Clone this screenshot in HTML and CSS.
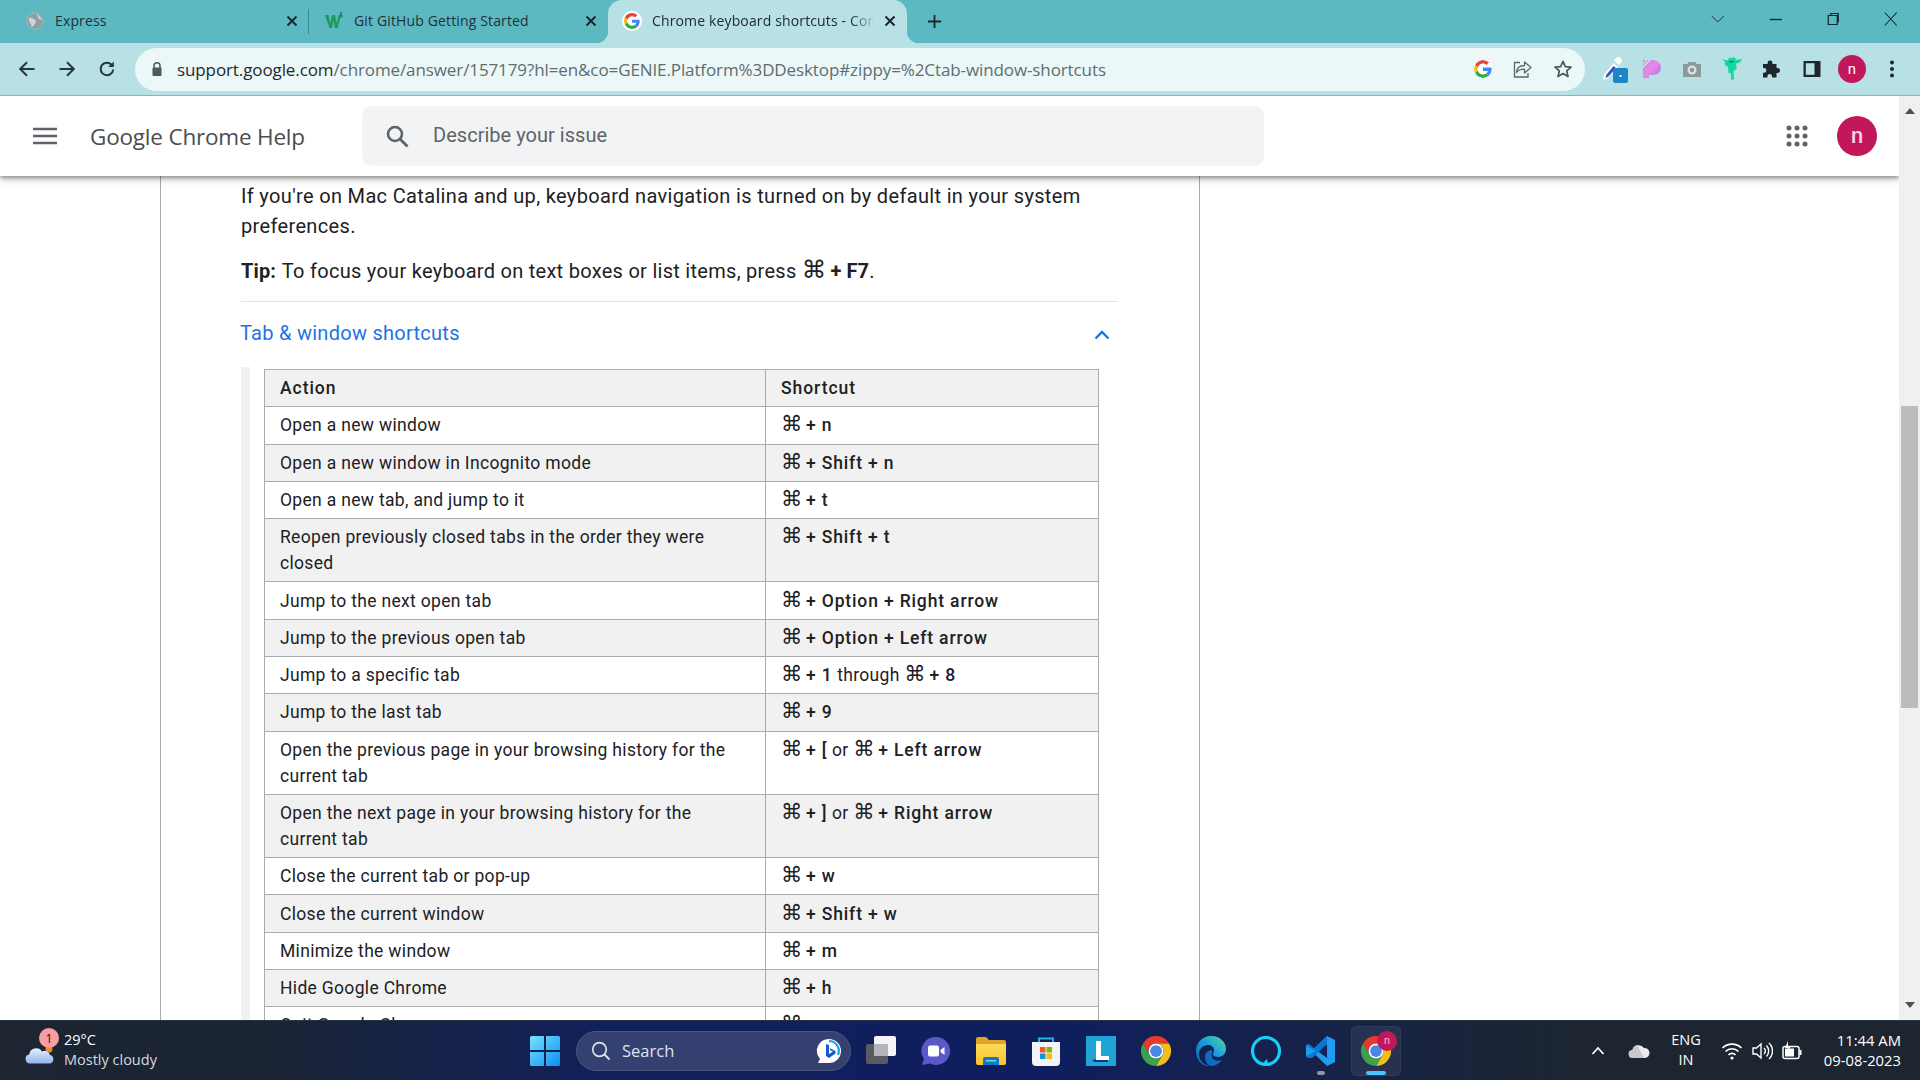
FILE: index.html
```html
<!DOCTYPE html>
<html lang="en">
<head>
<meta charset="utf-8">
<title>Chrome keyboard shortcuts</title>
<link rel="stylesheet" href="styles.css">
</head>
<body>
<svg class="defs" width="0" height="0" aria-hidden="true">
  <defs>
    <symbol id="g-logo" viewBox="0 0 48 48">
      <path fill="#EA4335" d="M24 9.5c3.54 0 6.71 1.22 9.21 3.6l6.85-6.85C35.9 2.38 30.47 0 24 0 14.62 0 6.51 5.38 2.56 13.22l7.98 6.19C12.43 13.72 17.74 9.5 24 9.5z"/>
      <path fill="#4285F4" d="M46.98 24.55c0-1.57-.15-3.09-.38-4.55H24v9.02h12.94c-.58 2.96-2.26 5.48-4.78 7.18l7.73 6c4.51-4.18 7.09-10.36 7.09-17.65z"/>
      <path fill="#FBBC05" d="M10.53 28.59c-.48-1.45-.76-2.99-.76-4.59s.27-3.14.76-4.59l-7.98-6.19C.92 16.46 0 20.12 0 24c0 3.88.92 7.54 2.56 10.78l7.97-6.19z"/>
      <path fill="#34A853" d="M24 48c6.48 0 11.93-2.13 15.89-5.81l-7.73-6c-2.15 1.45-4.92 2.3-8.16 2.3-6.26 0-11.57-4.22-13.47-9.91l-7.98 6.19C6.51 42.62 14.62 48 24 48z"/>
    </symbol>
    <symbol id="chrome-logo" viewBox="0 0 48 48">
      <path fill="#E33B2E" d="M3.2 12A24 24 0 0 1 44.8 12L24 12A12 12 0 0 0 13.6 30Z"/>
      <path fill="#F2BE1B" d="M44.8 12A24 24 0 0 1 24 48L34.4 30A12 12 0 0 0 24 12Z"/>
      <path fill="#3BA14B" d="M3.2 12A24 24 0 0 0 24 48L34.4 30A12 12 0 0 1 13.6 30Z"/>
      <circle cx="24" cy="24" r="12" fill="#fff"/>
      <circle cx="24" cy="24" r="9.4" fill="#4A86E8"/>
    </symbol>
    <symbol id="x-mark" viewBox="0 0 12 12">
      <path d="M1.5 1.5L10.5 10.5M10.5 1.5L1.5 10.5" fill="none" stroke="currentColor" stroke-width="1.9"/>
    </symbol>
    <linearGradient id="pastel" x1="0" y1="0" x2="1" y2="1">
      <stop offset="0" stop-color="#b78cf5"/><stop offset=".5" stop-color="#ee86e2"/><stop offset="1" stop-color="#7f7cf5"/>
    </linearGradient>
    <linearGradient id="win" x1="0" y1="0" x2="1" y2="1">
      <stop offset="0" stop-color="#74e4fb"/><stop offset="1" stop-color="#0f8df5"/>
    </linearGradient>
    <linearGradient id="edge1" x1="0" y1="1" x2="1" y2="0">
      <stop offset="0" stop-color="#0c59a4"/><stop offset=".55" stop-color="#1b9de2"/><stop offset="1" stop-color="#5fd98a"/>
    </linearGradient>
    <linearGradient id="folder" x1="0" y1="0" x2="0" y2="1">
      <stop offset="0" stop-color="#ffd95c"/><stop offset="1" stop-color="#fcc62d"/>
    </linearGradient>
    <linearGradient id="cloud" x1="0" y1="0" x2="0" y2="1">
      <stop offset="0" stop-color="#e6effc"/><stop offset="1" stop-color="#8fb6ee"/>
    </linearGradient>
  </defs>
</svg>

<div class="window">
  <header class="tabstrip">
    <div class="tab">
      <svg class="favicon" viewBox="0 0 18 18"><circle cx="9" cy="9" r="8.2" fill="#8f9ea3" stroke="#a7b6ba"/><path d="M3 6c3-1 4 1 6 2s1 3 0 4-2 3-3 3c-1-2-1-3-2-4S3 8 3 6zM11 2c2 1 4 3 5 6-2 0-4-1-4-3z" fill="#c9d5d8"/></svg>
      <span class="tab-title">Express</span>
      <svg class="tab-close"><use href="#x-mark"/></svg>
    </div>
    <div class="tab tab-sep">
      <svg class="favicon" viewBox="0 0 18 18"><path d="M0 3h3.400l1.700 8 2-8h2.800l2 8 1.700-8H16l-3.400 13H10L8.500 8.500 7 16H4.400z" fill="#1d9a5b"/><path d="M15 .5h2.600L16 2.500q1.700.3 1.700 1.700 0 1.600-1.900 1.600-1.100 0-1.700-.7l.6-.7q.4.500 1.100.500.8 0 .8-.7 0-.8-1.600-.7z" fill="#1d7a4c"/></svg>
      <span class="tab-title">Git GitHub Getting Started</span>
      <svg class="tab-close"><use href="#x-mark"/></svg>
    </div>
    <div class="tab tab-active">
      <span class="fav-disc"><svg class="fav-g"><use href="#g-logo"/></svg></span>
      <span class="tab-title tab-fade">Chrome keyboard shortcuts - Cor</span>
      <svg class="tab-close"><use href="#x-mark"/></svg>
    </div>
    <svg class="new-tab" viewBox="0 0 16 16"><path d="M8 1v14M1 8h14" fill="none" stroke="#1c2a2e" stroke-width="2"/></svg>
    <div class="win-controls">
      <svg class="wc" viewBox="0 0 16 16"><path d="M2 5l6 6 6-6" fill="none" stroke="#1d3338" stroke-width="1"/></svg>
      <svg class="wc" viewBox="0 0 16 16"><path d="M2 8.500h12" fill="none" stroke="#14262a" stroke-width="1.400"/></svg>
      <svg class="wc" viewBox="0 0 16 16"><path d="M3.500 4.500h9v9h-9zM6 4.500V2.500h7.500V11h-1" fill="none" stroke="#14262a" stroke-width="1.200"/></svg>
      <svg class="wc" viewBox="0 0 16 16"><path d="M2 1.500l12 13M14 1.500l-12 13" fill="none" stroke="#14262a" stroke-width="1.100"/></svg>
    </div>
  </header>

  <nav class="toolbar">
    <span class="tbtn"><svg class="i20" viewBox="0 0 20 20"><path d="M17.500 10H3.500M10 3.200L3.200 10l6.800 6.800" fill="none" stroke="#22383d" stroke-width="2"/></svg></span>
    <span class="tbtn"><svg class="i20" viewBox="0 0 20 20"><path d="M2.500 10h14M10 3.200l6.800 6.800-6.800 6.800" fill="none" stroke="#22383d" stroke-width="2"/></svg></span>
    <span class="tbtn"><svg class="i20" viewBox="0 0 20 20"><path d="M16.200 10.500a6.300 6.300 0 1 1-1.800-5" fill="none" stroke="#22383d" stroke-width="2"/><path d="M16.800 2.500v5.500h-5.500z" fill="#22383d"/></svg></span>
    <div class="omnibox">
      <svg class="lock" viewBox="0 0 14 16"><path d="M4 7V4.800a3 3 0 0 1 6 0V7" fill="none" stroke="#4c5a5d" stroke-width="1.500"/><rect x="2.500" y="6.500" width="9" height="8.500" rx="1" fill="#4c5a5d"/></svg>
      <span class="url"><span class="url-host">support.google.com</span>/chrome/answer/157179?hl=en&amp;co=GENIE.Platform%3DDesktop#zippy=%2Ctab-window-shortcuts</span>
      <span class="obtn"><svg class="g-omni"><use href="#g-logo"/></svg></span>
      <span class="obtn"><svg class="i20" viewBox="0 0 20 20"><path d="M11.500 3v3.500C6 6.500 3.800 10 3.500 13.500c1.800-2.600 4.300-3.400 8-3.300V14L18 8.500z" fill="none" stroke="#5c686b" stroke-width="1.300" stroke-linejoin="round"/><path d="M7 3.500H1.500v14.500H15v-4" fill="none" stroke="#5c686b" stroke-width="1.300"/></svg></span>
      <span class="obtn"><svg class="i20" viewBox="0 0 20 20"><path d="M10 2.300l2.300 5.300 5.700.5-4.300 3.800 1.300 5.600L10 14.600l-5 2.900 1.300-5.600L2 8.100l5.700-.5z" fill="none" stroke="#4d5659" stroke-width="1.700" stroke-linejoin="round"/></svg></span>
    </div>
    <div class="ext-row">
      <span class="ext ext-first"><svg class="i28" viewBox="0 0 28 28"><path d="M13.500 8l4.500 4-9.500 11-5.500 2 1-5.500z" fill="#fff"/><path d="M13.500 11l2.500 2-8 9-2.500.7.700-2.700z" fill="#3452c4"/><path d="M17 2l4 .5 1 4-3 3.500-5-4.500z" fill="#fff"/><rect x="13" y="13" width="15" height="15" rx="2" fill="#1d84c6"/><rect x="19.500" y="20" width="2" height="2" fill="#fff"/></svg></span>
      <span class="ext"><svg class="i20" viewBox="0 0 20 20"><path d="M1 1h9.500C15.500 1 19 4 19 8.500S15.500 16 10.500 16H7v3H1z" fill="url(#pastel)"/><path d="M1 7L7 1h2L1 9zM1 4l3-3h1.500L1 5.500z" fill="#d7e7ee"/></svg></span>
      <span class="ext"><svg class="i20" viewBox="0 0 20 20"><path d="M6.500 3h7l1.200 2H19v13H1V5h4.300z" fill="#8f9899"/><circle cx="10" cy="11" r="4.500" fill="#d6e4e6"/><circle cx="10" cy="11" r="2.300" fill="#8f9899"/></svg></span>
      <span class="ext"><svg class="ninja" viewBox="0 0 20 24"><path d="M0 2l5.500 1.500L7 1l6-.5 1 2.500 6-1-2 3.500-4 1 .8 5-3.300 3 .5 7.500-2.500 1.500-1-8-2 1-.5-6.500-3-2-.5-4z" fill="#17d7a0"/><path d="M7 4l5 0-1 1.500H8z" fill="#0b7a5a"/></svg></span>
      <span class="ext"><svg class="i20" viewBox="0 0 20 20"><path d="M8 1.500a2.400 2.400 0 0 1 2.400 2.400V5h4.100v4.100h1.100a2.400 2.400 0 0 1 0 4.800h-1.100v4.600H10v-1.200a2.300 2.300 0 0 0-4.600 0v1.200H1v-4.800h1.100a2.300 2.300 0 0 0 0-4.600H1V5h4.600V3.900A2.400 2.400 0 0 1 8 1.500z" fill="#1f2529"/></svg></span>
      <span class="ext"><svg class="i20" viewBox="0 0 20 20"><path d="M1.500 2h17v16h-17z" fill="#1f2529"/><path d="M3.800 4.200h8.700v11.600H3.800z" fill="#b8e1e5"/></svg></span>
      <span class="ext"><span class="avatar-sm">n</span></span>
      <span class="ext"><svg class="i20" viewBox="0 0 20 20"><circle cx="10" cy="3.500" r="2" fill="#1f2529"/><circle cx="10" cy="10" r="2" fill="#1f2529"/><circle cx="10" cy="16.500" r="2" fill="#1f2529"/></svg></span>
    </div>
  </nav>

  <div class="viewport">
    <div class="page">
      <div class="help-header">
        <svg class="burger" viewBox="0 0 24 18"><path d="M0 2h24M0 9h24M0 16h24" stroke="#5f6368" stroke-width="2.600" fill="none"/></svg>
        <span class="product">Google Chrome Help</span>
        <div class="search-box">
          <svg class="search-ico" viewBox="0 0 24 24"><circle cx="10" cy="10" r="7" fill="none" stroke="#5f6368" stroke-width="2.600"/><path d="M15 15l7.500 7.500" stroke="#5f6368" stroke-width="2.800"/></svg>
          <span class="placeholder">Describe your issue</span>
        </div>
        <svg class="apps" viewBox="0 0 22 22"><g fill="#5f6368"><circle cx="3" cy="3" r="2.500"/><circle cx="11" cy="3" r="2.500"/><circle cx="19" cy="3" r="2.500"/><circle cx="3" cy="11" r="2.500"/><circle cx="11" cy="11" r="2.500"/><circle cx="19" cy="11" r="2.500"/><circle cx="3" cy="19" r="2.500"/><circle cx="11" cy="19" r="2.500"/><circle cx="19" cy="19" r="2.500"/></g></svg>
        <span class="avatar-lg">n</span>
      </div>

      <article class="article">
        <p class="para">If you're on Mac Catalina and up, keyboard navigation is turned on by default in your system preferences.</p>
        <p class="para para-tip"><strong class="tip-label">Tip:</strong> To focus your keyboard on text boxes or list items, press <span class="cmd">⌘</span> <strong>+ F7</strong>.</p>
        <hr class="rule">
        <div class="zippy-title">
          <span class="zippy-text">Tab &amp; window shortcuts</span>
          <svg class="chev" viewBox="0 0 16 10"><path d="M1.500 8.500L8 2l6.500 6.500" fill="none" stroke="#1a73e8" stroke-width="2.400"/></svg>
        </div>
        <div class="zippy-body">
          <table class="keys">
            <thead>
              <tr><th class="col-a">Action</th><th class="col-b">Shortcut</th></tr>
            </thead>
            <tbody>
              <tr><td>Open a new window</td><td><span class="cmd">⌘</span> <strong>+ n</strong></td></tr>
              <tr><td>Open a new window in Incognito mode</td><td><span class="cmd">⌘</span> <strong>+ Shift + n</strong></td></tr>
              <tr><td>Open a new tab, and jump to it</td><td><span class="cmd">⌘</span> <strong>+ t</strong></td></tr>
              <tr><td>Reopen previously closed tabs in the order they were closed</td><td><span class="cmd">⌘</span> <strong>+ Shift + t</strong></td></tr>
              <tr><td>Jump to the next open tab</td><td><span class="cmd">⌘</span> <strong>+ Option + Right arrow</strong></td></tr>
              <tr><td>Jump to the previous open tab</td><td><span class="cmd">⌘</span> <strong>+ Option + Left arrow</strong></td></tr>
              <tr><td>Jump to a specific tab</td><td><span class="cmd">⌘</span> <strong>+ 1</strong> through <span class="cmd">⌘</span> <strong>+ 8</strong></td></tr>
              <tr><td>Jump to the last tab</td><td><span class="cmd">⌘</span> <strong>+ 9</strong></td></tr>
              <tr><td>Open the previous page in your browsing history for the current tab</td><td><span class="cmd">⌘</span> <strong>+ [</strong> or <span class="cmd">⌘</span> <strong>+ Left arrow</strong></td></tr>
              <tr><td>Open the next page in your browsing history for the current tab</td><td><span class="cmd">⌘</span> <strong>+ ]</strong> or <span class="cmd">⌘</span> <strong>+ Right arrow</strong></td></tr>
              <tr><td>Close the current tab or pop-up</td><td><span class="cmd">⌘</span> <strong>+ w</strong></td></tr>
              <tr><td>Close the current window</td><td><span class="cmd">⌘</span> <strong>+ Shift + w</strong></td></tr>
              <tr><td>Minimize the window</td><td><span class="cmd">⌘</span> <strong>+ m</strong></td></tr>
              <tr><td>Hide Google Chrome</td><td><span class="cmd">⌘</span> <strong>+ h</strong></td></tr>
              <tr><td>Quit Google Chrome</td><td><span class="cmd">⌘</span> <strong>+ q</strong></td></tr>
            </tbody>
          </table>
        </div>
      </article>
    </div>
    <aside class="scrollbar">
      <span class="sb-up"></span>
      <span class="sb-thumb"></span>
      <span class="sb-down"></span>
    </aside>
  </div>

  <footer class="taskbar">
    <div class="weather">
      <span class="weather-ico">
        <svg class="cloud-ico" viewBox="0 0 30 18"><circle cx="24" cy="3" r="3.500" fill="#f08a24"/><path d="M5 17.500a4.500 4.500 0 0 1-.8-8.900A7 7 0 0 1 17 5.500a5.500 5.500 0 0 1 8 3.600 4.300 4.300 0 0 1 0 8.400z" fill="url(#cloud)"/></svg>
        <span class="w-badge">1</span>
      </span>
      <div class="weather-text"><span class="w-temp">29°C</span><span class="w-desc">Mostly cloudy</span></div>
    </div>
    <div class="task-center">
      <span class="cell"><svg class="i30" viewBox="0 0 30 30"><path d="M0 1.500A1.500 1.500 0 0 1 1.500 0H14v14H0zM16 0h12.500A1.500 1.500 0 0 1 30 1.500V14H16zM0 16h14v14H1.500A1.500 1.500 0 0 1 0 28.500zM16 16h14v12.500a1.500 1.500 0 0 1-1.500 1.500H16z" fill="url(#win)"/></svg></span>
      <div class="task-search">
        <svg class="ts-ico" viewBox="0 0 20 20"><circle cx="8.500" cy="8.500" r="6.800" fill="none" stroke="#dfe4ee" stroke-width="1.700"/><path d="M13.500 13.500l5 5" stroke="#dfe4ee" stroke-width="1.800"/></svg>
        <span class="ts-text">Search</span>
        <svg class="ts-bing" viewBox="0 0 26 26"><path d="M13 1a12 12 0 0 1 0 24H2l2-4A12 12 0 0 1 13 1z" fill="#fff"/><path d="M13 3a10 10 0 0 1 9 14" fill="none" stroke="#1aa5ea" stroke-width="2.200"/><path d="M10 6l3 1v9l4-2.500-2.500-1L13.500 10l6 3v2.500L13 20l-3-2z" fill="#1458d2"/></svg>
      </div>
      <span class="cell"><svg class="i30" viewBox="0 0 30 30"><rect x="0" y="8" width="22" height="20" rx="2" fill="#5b5b5f"/><rect x="8" y="0" width="22" height="20" rx="2" fill="#f4f4f6"/><rect x="8" y="8" width="14" height="12" fill="#b6b6ba"/></svg></span>
      <span class="cell"><svg class="i30" viewBox="0 0 30 30"><path d="M15 1a14 14 0 1 1-6 26.600L1 29l2-6A14 14 0 0 1 15 1z" fill="#5b58c9"/><rect x="7" y="9.500" width="11" height="11" rx="2" fill="#fff"/><path d="M19.500 14l4-3v8l-4-3z" fill="#fff"/></svg></span>
      <span class="cell"><svg class="i30" viewBox="0 0 30 30"><path d="M0 3a2 2 0 0 1 2-2h8l3 3h15a2 2 0 0 1 2 2v4H0z" fill="#e0a526"/><path d="M0 8h30v19a2 2 0 0 1-2 2H2a2 2 0 0 1-2-2z" fill="url(#folder)"/><path d="M7 29v-6a2 2 0 0 1 2-2h12a2 2 0 0 1 2 2v6z" fill="#1279c7"/><rect x="10" y="24" width="10" height="1.500" fill="#7fd0f5"/></svg></span>
      <span class="cell"><svg class="i30" viewBox="0 0 30 30"><path d="M8 7V2.500h14V7" fill="none" stroke="#20b2ee" stroke-width="2"/><path d="M1 6h28v20a4 4 0 0 1-4 4H5a4 4 0 0 1-4-4z" fill="#f3f3f3"/><rect x="9" y="11" width="5.500" height="5.500" fill="#f05a28"/><rect x="15.500" y="11" width="5.500" height="5.500" fill="#7fba00"/><rect x="9" y="17.500" width="5.500" height="5.500" fill="#0b9ae0"/><rect x="15.500" y="17.500" width="5.500" height="5.500" fill="#fdb900"/></svg></span>
      <span class="cell"><svg class="i30" viewBox="0 0 30 30"><rect width="30" height="30" fill="#20a4d6"/><path d="M6 24l5-1V7h2v16h9v3H8z" fill="#0e3a8c"/><path d="M10 5h5v15h8v4H10z" fill="#fff"/></svg></span>
      <span class="cell"><svg class="i30"><use href="#chrome-logo"/></svg></span>
      <span class="cell"><svg class="i30" viewBox="0 0 30 30"><path d="M15 0c9 0 15 6 15 13 0 5-4 8-8 8-3 0-5-1-5-3 0-1 1-2 1-4 0-3-3-5-6-5-5 0-9 4-9 9 0 7 6 12 12 12-8 1-15-5-15-15C0 7 6 0 15 0z" fill="url(#edge1)"/><path d="M9 21c0-4 3-7 7-7 1 3-1 4 0 7s5 5 10 3c-3 4-7 6-11 6-4-1-6-5-6-9z" fill="#0f6cbd"/></svg></span>
      <span class="cell"><svg class="i30" viewBox="0 0 30 30"><path d="M15 1.500a13.500 13.500 0 1 0 0 27 13.500 13.500 0 1 0 0-27z" fill="none" stroke="#16cdf5" stroke-width="3.200"/><path d="M12 27l4-4 1 5z" fill="#16cdf5"/></svg></span>
      <span class="cell cell-running"><svg class="i30" viewBox="0 0 30 30"><path d="M21 0l8 4v22l-8 4-13-12.500L2.500 22 0 20.500v-11L2.500 8l5.500 4.500z" fill="#1f9cf0"/><path d="M21 8L11.500 15 21 22z" fill="#0f2460"/><path d="M21 0v8L6 22l-3.500 0L0 20.500l9.500-5.500L0 9.500 2.500 8l5.500 4.500z" fill="#0a78d0"/></svg></span>
      <span class="cell cell-active">
        <svg class="i30"><use href="#chrome-logo"/></svg>
        <span class="mini-badge">n</span>
      </span>
    </div>
    <div class="tray">
      <svg class="tray-chev" viewBox="0 0 14 10"><path d="M1.500 8L7 2l5.500 6" fill="none" stroke="#fff" stroke-width="1.800"/></svg>
      <svg class="tray-cloud" viewBox="0 0 22 16"><path d="M5 15a4 4 0 0 1-.6-8A6.500 6.500 0 0 1 16 5a5 5 0 0 1 1 10z" fill="#e8eaee"/><path d="M9 2l7 13H5a4 4 0 0 1-.6-8A6.500 6.500 0 0 1 9 2z" fill="#c5c8ce"/></svg>
      <div class="lang"><span>ENG</span><span>IN</span></div>
      <svg class="tray-i" viewBox="0 0 22 20"><g fill="none" stroke="#fff" stroke-width="1.600"><path d="M1.500 7a13.500 13.500 0 0 1 19 0"/><path d="M4.500 10.500a9 9 0 0 1 13 0"/><path d="M7.500 14a4.500 4.500 0 0 1 7 0"/></g><circle cx="11" cy="17" r="1.600" fill="#fff"/></svg>
      <svg class="tray-i" viewBox="0 0 22 20"><path d="M2 7h3.500L10 3v14l-4.500-4H2z" fill="none" stroke="#fff" stroke-width="1.400"/><path d="M13 7a4 4 0 0 1 0 6M15.500 4.500a8 8 0 0 1 0 11M18 2a11 11 0 0 1 0 16" fill="none" stroke="#fff" stroke-width="1.400"/></svg>
      <svg class="tray-i" viewBox="0 0 22 20"><rect x="2" y="5.500" width="16" height="12" rx="2" fill="none" stroke="#fff" stroke-width="1.500"/><rect x="4" y="7.500" width="9" height="8" fill="#fff"/><rect x="18.500" y="9" width="2" height="5" fill="#fff"/><path d="M7 0L4 7h3l-1 4 4-6H7z" fill="#fff"/></svg>
      <div class="clock"><span>11:44 AM</span><span>09-08-2023</span></div>
    </div>
  </footer>
</div>
</body>
</html>
```

FILE: styles.css
```css
* { box-sizing: border-box; }
html, body { margin: 0; padding: 0; height: 100%; overflow: hidden; }
body { font-family: "Open Sans", "Noto Sans", sans-serif; background: #fff; color: #202124; }
.defs { position: absolute; }
.window { width: 1920px; height: 1080px; display: flex; flex-direction: column; }

/* Tab strip */
.tabstrip { height: 43px; background: #5cb9c2; display: flex; align-items: stretch; padding-left: 10px; flex: none; }
.tab { width: 299px; display: flex; align-items: center; padding: 0 11px 2px 16px; position: relative; color: #1e3236; font-size: 14px; letter-spacing: .14px; }
.tab-sep::before { content: ""; position: absolute; left: -1px; top: 9px; height: 25px; width: 1px; background: #3a8890; }
.tab-active { background: #b8e1e5; border-radius: 14px 14px 0 0; padding-left: 15px; color: #202c2f; }
.tab-active::before, .tab-active::after { content: ""; position: absolute; bottom: 0; width: 12px; height: 12px; }
.tab-active::before { left: -12px; background: radial-gradient(circle at 0 0, transparent 12px, #b8e1e5 12.5px); }
.tab-active::after { right: -12px; background: radial-gradient(circle at 100% 0, transparent 12px, #b8e1e5 12.5px); }
.favicon { width: 18px; height: 18px; flex: none; }
.fav-disc { width: 20px; height: 20px; border-radius: 50%; background: #fff; display: flex; align-items: center; justify-content: center; margin-left: -1px; flex: none; }
.fav-g { width: 16px; height: 16px; }
.tab-title { margin-left: 11px; flex: 1; white-space: nowrap; overflow: hidden; min-width: 0; }
.tab-fade { margin-left: 10px; -webkit-mask-image: linear-gradient(90deg, #000 88%, transparent 100%); mask-image: linear-gradient(90deg, #000 88%, transparent 100%); }
.tab-close { width: 12px; height: 12px; flex: none; margin-left: 7px; color: #14262a; }
.new-tab { width: 15px; height: 15px; align-self: center; margin-left: 20px; flex: none; }
.win-controls { margin-left: auto; display: flex; align-items: center; padding-right: 1px; height: 38px; }
.wc { width: 57.500px; height: 16px; }

/* Toolbar */
.toolbar { height: 53px; flex: none; background: #b8e1e5; border-bottom: 1px solid #8fb3b8; display: flex; align-items: center; padding: 0 7px; }
.tbtn { width: 40px; height: 40px; display: flex; align-items: center; justify-content: center; flex: none; }
.i20 { width: 20px; height: 20px; flex: none; }
.i28 { width: 28px; height: 28px; flex: none; }
.i30 { width: 30px; height: 30px; flex: none; }
.ninja { width: 20px; height: 24px; flex: none; }
.omnibox { width: 1450px; height: 43px; margin-left: 8px; background: #ecf7f8; border-radius: 22px; display: flex; align-items: center; padding: 0 2px 0 15px; flex: none; }
.lock { width: 14px; height: 16px; flex: none; }
.url { flex: 1; margin-left: 13px; font-size: 17px; letter-spacing: -.105px; color: #5e6d70; white-space: nowrap; overflow: hidden; min-width: 0; }
.url-host { color: #1f2a2d; }
.obtn { width: 40px; height: 40px; display: flex; align-items: center; justify-content: center; flex: none; }
.g-omni { width: 18px; height: 18px; background: #fff; border-radius: 50%; }
.ext-row { display: flex; align-items: center; }
.ext { width: 40px; height: 40px; display: flex; align-items: center; justify-content: center; flex: none; }
.ext-first { width: 47px; justify-content: flex-end; padding-right: 4px; }
.avatar-sm { width: 28px; height: 28px; border-radius: 50%; background: #c2185b; color: #fff; font: 400 15px/28px Roboto, sans-serif; text-align: center; }

/* Page */
.viewport { flex: 1; display: flex; min-height: 0; }
.page { flex: 1; min-width: 0; display: flex; flex-direction: column; overflow: hidden; }
.help-header { height: 80px; flex: none; display: flex; align-items: center; background: #fff; box-shadow: 0 2px 4px rgba(0,0,0,.38), 0 5px 8px rgba(0,0,0,.12); position: relative; z-index: 1; padding-left: 33px; }
.burger { width: 24px; height: 18px; flex: none; }
.product { width: 272px; margin: 2px 0 0 33px; flex: none; font: 400 22.500px/30px "Open Sans", sans-serif; letter-spacing: -.2px; color: #4a4d51; }
.search-box { width: 902px; height: 60px; flex: none; background: #f1f3f4; border-radius: 10px; display: flex; align-items: center; padding-left: 23px; margin-top: -1px; }
.search-ico { width: 24px; height: 24px; flex: none; }
.placeholder { margin: -2px 0 0 24px; font: 400 20px/30px Roboto, sans-serif; letter-spacing: .03px; color: #5f6368; }
.apps { width: 22px; height: 22px; margin-left: 522px; flex: none; }
.avatar-lg { width: 40px; height: 40px; margin-left: 29px; border-radius: 50%; background: #c2185b; color: #f4d5e2; font: 500 22px/40px Roboto, sans-serif; text-align: center; flex: none; }

.article { width: 1040px; margin-left: 160px; flex: 1; border-left: 1px solid #aaa; border-right: 1px solid #aaa; padding: 5px 0 0 80px; font: 400 20px/30px Roboto, sans-serif; letter-spacing: .34px; color: #202124; }
.para { margin: 0 0 15px; width: 877px; }
.para-tip { letter-spacing: .28px; }
.article strong { font-weight: 700; letter-spacing: .1px; }
.tip-label { margin-right: 1px; }
.cmd { font-family: "DejaVu Sans", sans-serif; font-weight: 400; font-size: 1.220em; line-height: 1; letter-spacing: 0; margin-right: -1px; }
.rule { width: 877px; margin: 0; border: 0; border-top: 1px solid #e3e3e3; }
.zippy-title { width: 877px; margin-top: 16px; height: 30px; padding-right: 8px; display: flex; align-items: center; justify-content: space-between; color: #1a73e8; letter-spacing: .27px; }
.zippy-text { margin-left: -1px; }
.chev { width: 16px; height: 10px; margin-top: 4px; }
.zippy-body { margin-top: 19px; border-left: 9px solid #f1f1f1; padding: 2px 0 0 14px; width: 858px; }
.keys { width: 835px; table-layout: fixed; border-collapse: collapse; font-size: 17.500px; line-height: 26px; letter-spacing: .32px; }
.keys th, .keys td { border: 1px solid #aaa; padding: 5.150px 15px; text-align: left; vertical-align: top; font-weight: 400; }
.keys th { font-weight: 500; background: #f1f1f1; letter-spacing: .95px; }
.keys strong { font-weight: 500; letter-spacing: .85px; }
.col-a { width: 501px; }
.keys tbody tr:nth-child(even) td { background: #f1f1f1; }

/* Scrollbar */
.scrollbar { width: 21px; flex: none; background: #f0f0f0; display: flex; flex-direction: column; align-items: center; padding: 0 2px; }
.sb-up { width: 0; height: 0; margin-top: 12px; border: 5px solid transparent; border-top: 0; border-bottom: 6px solid #505050; flex: none; }
.sb-thumb { width: 17px; height: 302px; margin-top: 292px; background: #bcbcbc; flex: none; }
.sb-down { width: 0; height: 0; margin-top: auto; margin-bottom: 12px; border: 5px solid transparent; border-bottom: 0; border-top: 6px solid #505050; flex: none; }

/* Taskbar */
.taskbar { height: 60px; flex: none; background: linear-gradient(90deg, #1c2530 0%, #1a2334 14%, #10205c 32%, #0f1f5e 55%, #16224a 68%, #1c2530 82%, #1c2530 100%); border-top: 1px solid #2c3340; display: flex; align-items: center; color: #fff; }
.weather { width: 520px; padding-left: 25px; display: flex; align-items: center; flex: none; }
.weather-ico { width: 39px; height: 40px; position: relative; flex: none; }
.cloud-ico { width: 30px; height: 18px; position: absolute; left: 0; top: 15px; }
.w-badge { position: absolute; left: 14px; top: -3px; width: 20px; height: 20px; border-radius: 50%; background: #f99ca4; color: #222; font-size: 13px; line-height: 20px; text-align: center; }
.weather-text { display: flex; flex-direction: column; font-size: 14.500px; line-height: 20px; margin-top: -2px; }
.w-desc { color: #d6dae0; }
.task-center { display: flex; align-items: center; gap: 5px; flex: none; }
.cell { width: 50px; height: 50px; display: flex; align-items: center; justify-content: center; position: relative; flex: none; }
.cell-running::after { content: ""; position: absolute; left: 21px; bottom: 1px; width: 8px; height: 4px; border-radius: 3px; background: #8e95a3; }
.cell-active { background: rgba(255,255,255,.07); border-radius: 5px; box-shadow: inset 0 0 0 1px rgba(255,255,255,.05); }
.cell-active::after { content: ""; position: absolute; left: 15px; bottom: 1px; width: 20px; height: 4px; border-radius: 3px; background: #4cc2ff; }
.mini-badge { position: absolute; left: 26px; top: 5px; width: 20px; height: 20px; border-radius: 50%; background: #c2185b; color: #f0b9cf; font: 400 11px/20px Roboto, sans-serif; text-align: center; }
.task-search { width: 275px; height: 40px; margin-left: 1px; border-radius: 20px; background: #34406f; border: 1px solid #4a5582; display: flex; align-items: center; padding: 0 8px 0 14px; flex: none; }
.ts-ico { width: 20px; height: 20px; flex: none; }
.ts-text { margin-left: 11px; flex: 1; font-size: 16.500px; color: #dfe3ec; }
.ts-bing { width: 26px; height: 26px; flex: none; }
.tray { flex: 1; display: flex; align-items: center; padding-right: 19px; min-width: 0; }
.tray-chev { width: 14px; height: 10px; margin-left: 190px; flex: none; }
.tray-cloud { width: 22px; height: 16px; margin-left: 23px; flex: none; }
.lang { width: 40px; margin-left: 16px; display: flex; flex-direction: column; align-items: center; font-size: 14.500px; line-height: 20px; margin-top: -2px; flex: none; }
.tray-i { width: 22px; height: 20px; margin-left: 8px; flex: none; }
.lang + .tray-i { margin-left: 15px; }
.clock { margin-left: auto; display: flex; flex-direction: column; align-items: flex-end; font-size: 14.800px; line-height: 20px; margin-top: -2px; }
```
